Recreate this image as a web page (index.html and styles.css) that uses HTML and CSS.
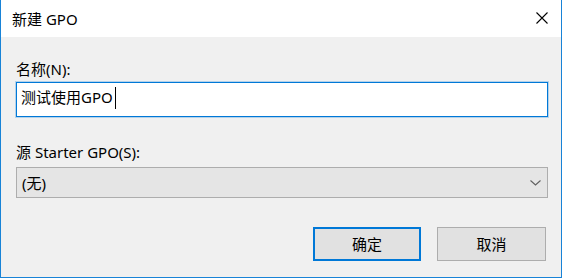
FILE: index.html
```html
<!DOCTYPE html>
<html lang="zh-CN">
<head>
<meta charset="utf-8">
<title>新建 GPO</title>
<link rel="stylesheet" href="styles.css">
</head>
<body>
<div class="window">
  <div class="titlebar">
    <span class="title">新建 GPO</span>
    <svg class="close" width="12" height="12" viewBox="0 0 12 12"><path d="M0.5 0.5 L11.5 11.5 M11.5 0.5 L0.5 11.5" stroke="#000" stroke-width="1.1" fill="none"/></svg>
  </div>
  <div class="content">
    <div class="label">名称(N):</div>
    <div class="input"><span class="value">测试使用GPO</span><span class="caret"></span></div>
    <div class="label label-2">源 Starter GPO(S):</div>
    <div class="select">
      <span class="value">(无)</span>
      <svg class="chevron" width="11" height="6" viewBox="0 0 11 6"><path d="M0.5 0.5 L5.5 5 L10.5 0.5" stroke="#606060" stroke-width="1.1" fill="none"/></svg>
    </div>
    <div class="buttons">
      <div class="btn btn-default">确定</div>
      <div class="btn btn-cancel">取消</div>
    </div>
  </div>
</div>
</body>
</html>
```

FILE: styles.css
```css
html, body {
  margin: 0;
  padding: 0;
  background: #ffffff;
}
body {
  font-family: "Noto Sans", "Noto Sans CJK SC", sans-serif;
  font-size: 15px;
  color: #000;
}
.window {
  width: 562px;
  height: 278px;
  box-sizing: border-box;
  border: 1px solid #1883d7;
  border-top: none;
  display: flex;
  flex-direction: column;
}
.titlebar {
  height: 37px;
  flex: none;
  background: #ffffff;
  display: flex;
  align-items: center;
  padding-left: 11px;
  padding-right: 13px;
}
.title {
  flex: 1;
  line-height: 20px;
  padding-top: 1px;
}
.close {
  display: block;
  margin-top: -1px;
}
.content {
  flex: 1;
  background: #f0f0f0;
  padding: 22px 13px 0 15px;
  display: flex;
  flex-direction: column;
}
.label {
  line-height: 20px;
  height: 20px;
}
.input {
  margin-top: 3px;
  height: 35px;
  box-sizing: border-box;
  border: 1px solid #0078d7;
  box-shadow: 0 0 0 1px rgba(0, 120, 215, 0.25);
  background: #ffffff;
  padding-left: 4px;
  display: flex;
  align-items: center;
}
.input .value {
  line-height: 20px;
  margin-top: -6px;
}
.caret {
  width: 1px;
  height: 22px;
  background: #000;
  margin-left: 2px;
  margin-top: -4px;
}
.label-2 {
  margin-top: 25px;
}
.select {
  margin-top: 5px;
  height: 31px;
  box-sizing: border-box;
  border: 1px solid #adadad;
  background: #e5e5e5;
  padding-left: 5px;
  padding-right: 6px;
  display: flex;
  align-items: center;
}
.select .value {
  flex: 1;
  line-height: 20px;
}
.chevron {
  display: block;
}
.buttons {
  margin-top: 29px;
  display: flex;
  justify-content: flex-end;
  gap: 16px;
  padding-right: 2px;
}
.btn {
  height: 34px;
  box-sizing: border-box;
  background: #e1e1e1;
  display: flex;
  align-items: center;
  justify-content: center;
  line-height: 20px;
}
.btn-default {
  width: 108px;
  border: 2px solid #0078d7;
}
.btn-cancel {
  width: 109px;
  border: 1px solid #adadad;
}
```
